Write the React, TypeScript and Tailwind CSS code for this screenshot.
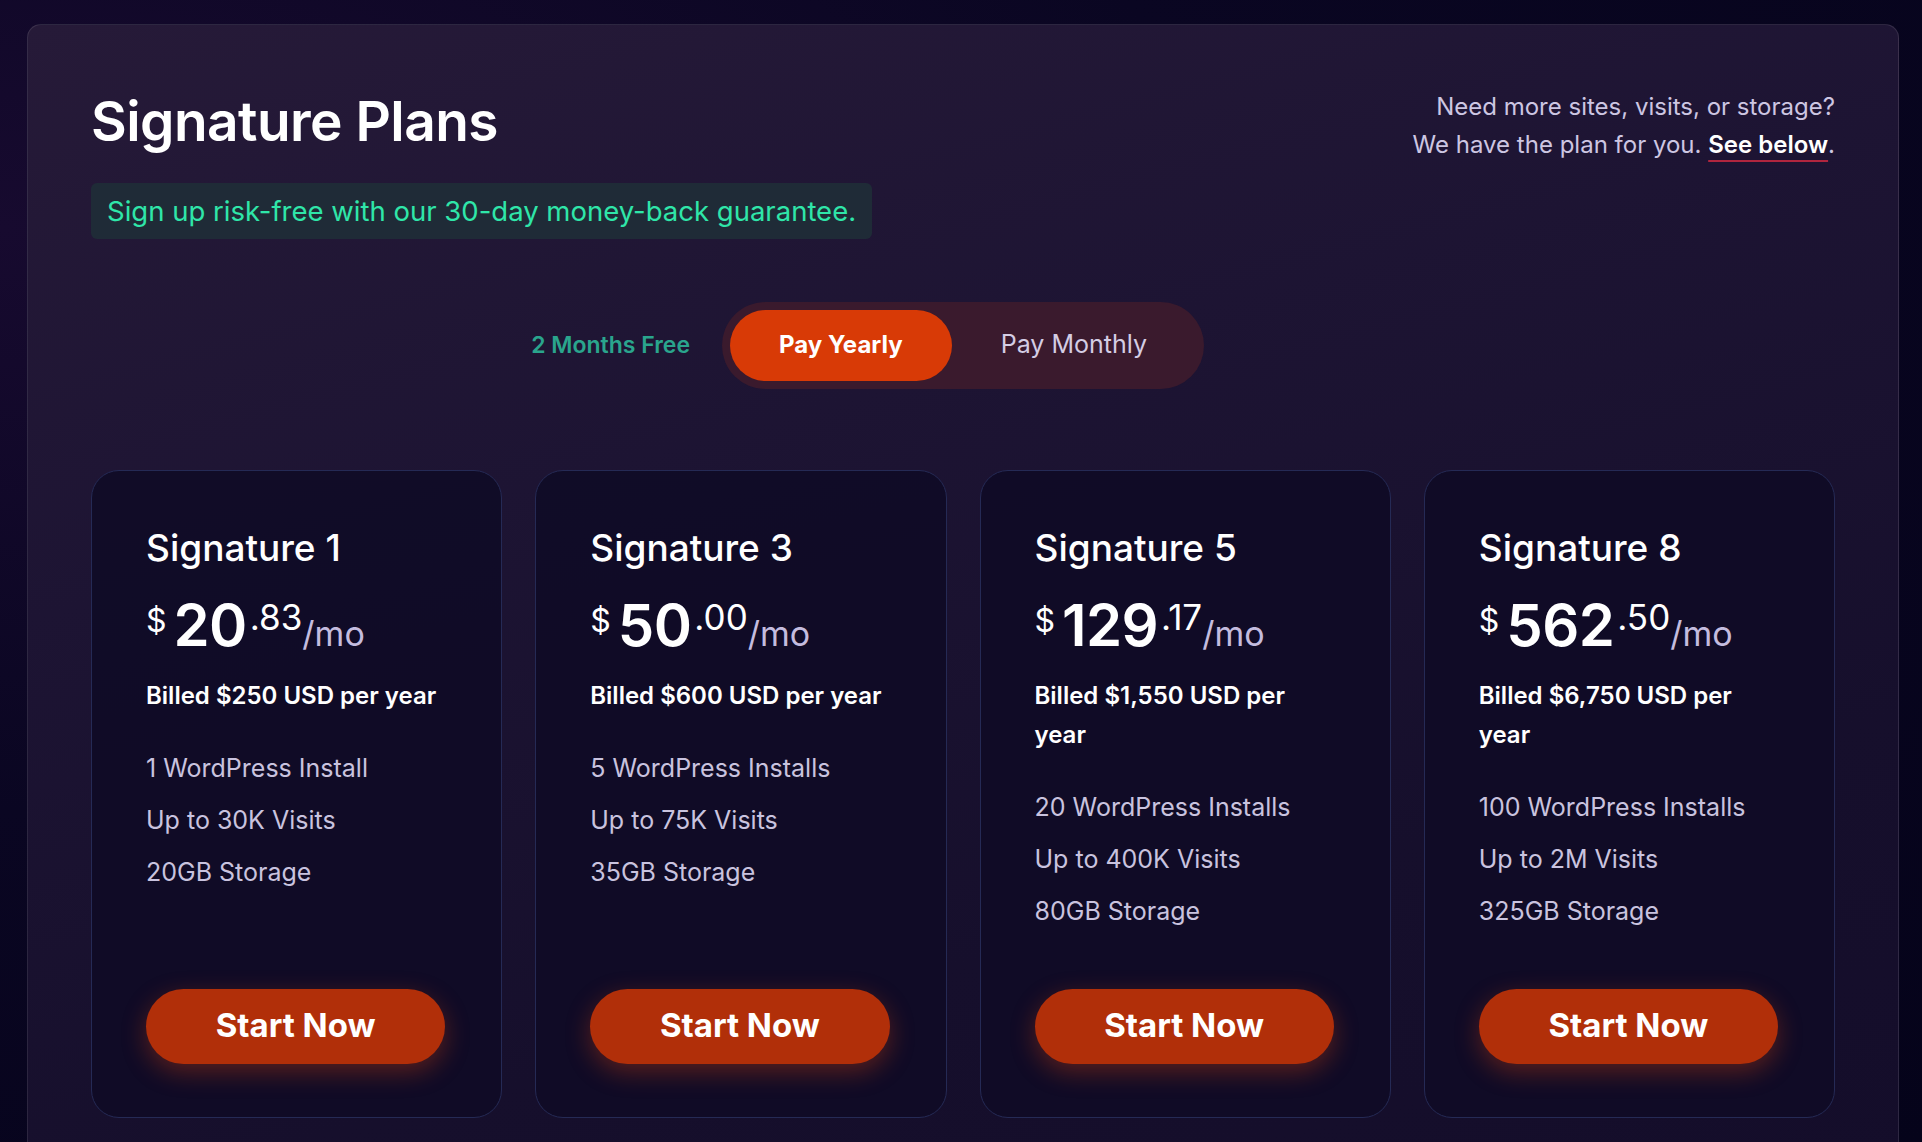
import { useState } from 'react';

const PLANS = [
  { name: 'Signature 1', whole: '20', cents: '83', billed: 'Billed $250 USD per year', features: ['1 WordPress Install', 'Up to 30K Visits', '20GB Storage'] },
  { name: 'Signature 3', whole: '50', cents: '00', billed: 'Billed $600 USD per year', features: ['5 WordPress Installs', 'Up to 75K Visits', '35GB Storage'] },
  { name: 'Signature 5', whole: '129', cents: '17', billed: 'Billed $1,550 USD per year', features: ['20 WordPress Installs', 'Up to 400K Visits', '80GB Storage'] },
  { name: 'Signature 8', whole: '562', cents: '50', billed: 'Billed $6,750 USD per year', features: ['100 WordPress Installs', 'Up to 2M Visits', '325GB Storage'] },
];

function PlanCard({ plan }: { plan: (typeof PLANS)[number] }) {
  return (
    <div className="flex flex-col min-h-[648px] rounded-[28px] border border-[#252a55] bg-[#0f0b26]/90 pl-[54px] pr-[56px] pt-[55px] pb-[53px]">
      <h3 className="text-[37px] leading-[44px] font-medium text-white">{plan.name}</h3>

      {/* price */}
      <div className="mt-[26px] flex items-baseline leading-none text-white">
        <span className="relative -top-[14px] text-[32px] mr-[7px]">$</span>
        <span className="text-[58px] font-semibold tracking-[-0.01em]">{plan.whole}</span>
        <span className="relative -top-[16px] text-[35px] ml-[3px]">.{plan.cents}</span>
        <span className="text-[34px] text-[#c4bcdf]">/mo</span>
      </div>

      <p className="mt-[22px] max-w-[296px] text-[24px] leading-[39px] font-semibold text-white">{plan.billed}</p>

      <ul className="mt-[27px] flex flex-col">
        {plan.features.map((f) => (
          <li key={f} className="text-[25px] leading-[52px] text-[#c9c3df]">{f}</li>
        ))}
      </ul>

      <button className="mt-auto h-[75px] w-full rounded-full bg-[#b12f09] text-[33px] font-bold text-white shadow-[0_8px_24px_rgba(226,70,12,0.35)]">
        Start Now
      </button>
    </div>
  );
}

export default function App() {
  const [yearly, setYearly] = useState(true);

  return (
    <div
      className="h-[1142px] w-full overflow-hidden bg-[radial-gradient(ellipse_at_0%_20%,#170a2f_0%,#0a0622_45%,#05031a_100%)] pt-[24px] pl-[27px] pr-[23px]"
      style={{ fontFamily: 'Inter, "Noto Sans", sans-serif' }}
    >
      <section className="min-h-[1200px] rounded-t-[14px] border border-white/10 bg-[linear-gradient(165deg,#261a38_0%,#1d1433_35%,#160f2c_70%,#140d2a_100%)] px-[63px] pt-[66px]">
        {/* HEADER */}
        <div className="flex items-start justify-between">
          <div>
            <h1 className="text-[55px] leading-[1.1] font-semibold text-white tracking-[-0.01em]">Signature Plans</h1>
            <p className="mt-[31px] inline-block rounded-md bg-[#1f2b37] px-4 h-[56px] leading-[56px] text-[27.5px] text-[#2fe6a9]">
              Sign up risk-free with our 30-day money-back guarantee.
            </p>
          </div>
          <div className="-mt-[3px] text-right text-[24px] leading-[38px] text-[#cdc6e2]">
            <p>Need more sites, visits, or storage?</p>
            <p>
              We have the plan for you.{' '}
              <a className="font-semibold text-white underline decoration-[#b0253e] decoration-2 underline-offset-[7px]">See below</a>.
            </p>
          </div>
        </div>

        {/* BILLING TOGGLE */}
        <div className="mt-[63px] grid grid-cols-[1fr_auto_1fr] items-center">
          <span className="justify-self-end mr-8 text-[23px] font-semibold text-[#2aa58d]">2 Months Free</span>
          <div className="flex rounded-full bg-[#3a1a2d] p-2">
            <button
              onClick={() => setYearly(true)}
              className={`h-[71px] rounded-full px-[49px] ${yearly ? 'bg-[#d83a06] text-[24px] font-bold text-white' : 'text-[25px] text-[#d4cde4]'}`}
            >
              Pay Yearly
            </button>
            <button
              onClick={() => setYearly(false)}
              className={`h-[71px] rounded-full px-[49px] ${!yearly ? 'bg-[#d83a06] text-[24px] font-bold text-white' : 'text-[25px] text-[#d4cde4]'}`}
            >
              Pay Monthly
            </button>
          </div>
          <div />
        </div>

        {/* PLANS */}
        <div className="mt-[81px] grid grid-cols-4 gap-[33px]">
          {PLANS.map((p) => (
            <PlanCard key={p.name} plan={p} />
          ))}
        </div>
      </section>
    </div>
  );
}
